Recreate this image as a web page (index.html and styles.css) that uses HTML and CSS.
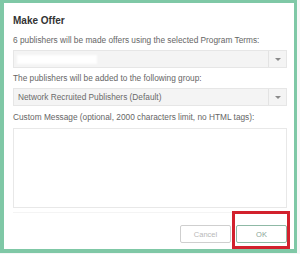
FILE: index.html
```html
<!DOCTYPE html>
<html>
<head>
<meta charset="utf-8">
<link rel="stylesheet" href="styles.css">
</head>
<body>
<div class="frame">
  <div class="dialog">
    <h1 class="title">Make Offer</h1>
    <p class="label l1">6 publishers will be made offers using the selected Program Terms:</p>
    <div class="select s1">
      <span class="value"><span class="redact"></span></span>
      <span class="arrow"><span class="tri"></span></span>
    </div>
    <p class="label l2">The publishers will be added to the following group:</p>
    <div class="select s2">
      <span class="value">Network Recruited Publishers (Default)</span>
      <span class="arrow"><span class="tri"></span></span>
    </div>
    <p class="label l3">Custom Message (optional, 2000 characters limit, no HTML tags):</p>
    <div class="textarea"></div>
    <div class="sep"></div>
    <div class="footer">
      <button class="btn cancel">Cancel</button>
      <span class="okwrap">
        <button class="btn ok">OK</button>
        <span class="highlight"></span>
      </span>
    </div>
  </div>
</div>
</body>
</html>
```
FILE: styles.css
```css
* { box-sizing: border-box; }
html, body {
  margin: 0;
  padding: 0;
  background: #f6f7f7;
}
body {
  width: 300px;
  height: 254px;
  overflow: hidden;
  font-family: "Liberation Sans", Arial, sans-serif;
}
.frame {
  width: 297px;
  height: 253px;
  border-style: solid;
  border-color: #7fc8a6;
  border-width: 3px 3px 4px 4px;
  background: #ffffff;
}
.dialog {
  display: flex;
  flex-direction: column;
  padding: 11px 7px 0 9px;
}
.title {
  margin: 0;
  font-size: 10px;
  line-height: 14px;
  font-weight: bold;
  color: #333333;
}
.label {
  margin: 0;
  font-size: 8.3px;
  line-height: 12px;
  color: #666666;
  white-space: nowrap;
}
.l1 { margin-top: 6px; }
.l2 { margin-top: 4px; }
.l3 { margin-top: 5px; }
.select {
  display: flex;
  height: 18px;
  background: #f4f4f4;
  border: 1px solid #e6e6e6;
  margin-top: 4px;
}
.value {
  flex: 1;
  display: flex;
  align-items: center;
  padding-left: 4px;
  font-size: 8.3px;
  color: #6a6a6a;
  white-space: nowrap;
}
.redact {
  display: block;
  width: 80px;
  height: 9px;
  margin-left: -1px;
  background: #ffffff;
  filter: blur(1px);
}
.arrow {
  width: 18px;
  border-left: 1px solid #e3e3e3;
  display: flex;
  align-items: center;
  justify-content: center;
}
.tri {
  width: 0;
  height: 0;
  border-left: 3px solid transparent;
  border-right: 3px solid transparent;
  border-top: 3px solid #8a8a8a;
}
.textarea {
  margin-top: 5px;
  height: 80px;
  border: 1px solid #e8e8e8;
  background: #ffffff;
}
.sep {
  margin-top: 4px;
  height: 1px;
  background: #f4f4f4;
}
.footer {
  display: flex;
  justify-content: flex-end;
  gap: 5px;
  margin-top: 12px;
}
.btn {
  width: 51px;
  height: 18px;
  padding: 0;
  margin: 0;
  font-family: "Liberation Sans", Arial, sans-serif;
  font-size: 7.5px;
  background: #ffffff;
  border-radius: 2px;
}
.cancel {
  border: 1px solid #cfcfcf;
  color: #b8b8b8;
}
.okwrap {
  position: relative;
  display: block;
}
.ok {
  display: block;
  border: 1px solid #8fb9a6;
  color: #8aa598;
}
.highlight {
  position: absolute;
  left: -4px;
  right: -3px;
  top: -14px;
  bottom: -6px;
  border: 3px solid #d2212d;
}
```
